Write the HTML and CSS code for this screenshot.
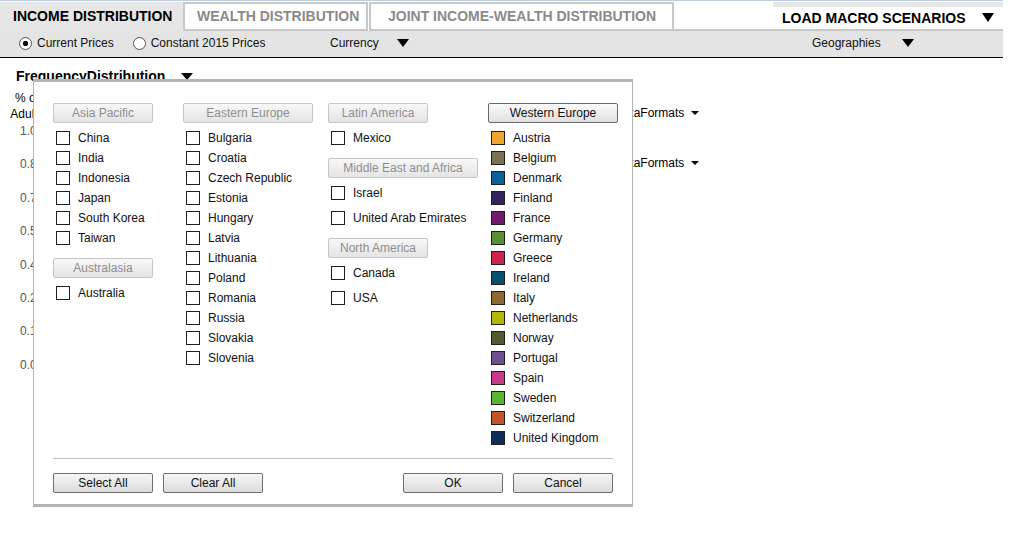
FILE: index.html
```html
<!DOCTYPE html>
<html>
<head>
<meta charset="utf-8">
<title>Income Distribution</title>
<link rel="stylesheet" href="styles.css">
</head>
<body>
<div class="app">
  <header class="tabs">
    <div class="tab active">INCOME DISTRIBUTION</div>
    <div class="tab wealth">WEALTH DISTRIBUTION</div>
    <div class="tab joint">JOINT INCOME-WEALTH DISTRIBUTION</div>
    <div class="tab-fill"></div>
    <div class="load"><span>LOAD MACRO SCENARIOS</span><i class="tri"></i></div>
  </header>

  <div class="toolbar">
    <div class="radios">
      <label class="radio"><span class="dot on"></span>Current Prices</label>
      <label class="radio second"><span class="dot"></span>Constant 2015 Prices</label>
    </div>
    <div class="dd currency">Currency<i class="tri"></i></div>
    <div class="dd geo">Geographies<i class="tri"></i></div>
  </div>

  <main class="content">
    <div class="freq">FrequencyDistribution<i class="tri"></i></div>
    <div class="chart">
      <div class="yaxis">
        <div class="ytitle">% of<br>Adults</div>
        <ul class="ticks">
          <li>1.0</li><li>0.8</li><li>0.7</li><li>0.5</li><li>0.4</li><li>0.2</li><li>0.1</li><li>0.0</li>
        </ul>
      </div>
      <div class="formats">
        <div class="fmt">DataFormats<i class="tri small"></i></div>
        <div class="fmt second">DataFormats<i class="tri small"></i></div>
      </div>
    </div>
  </main>

  <div class="modal">
    <div class="mbody">
      <div class="col">
        <div class="group">
          <div class="region w100">Asia Pacific</div>
          <ul class="list">
            <li class="item"><span class="box"></span>China</li>
            <li class="item"><span class="box"></span>India</li>
            <li class="item"><span class="box"></span>Indonesia</li>
            <li class="item"><span class="box"></span>Japan</li>
            <li class="item"><span class="box"></span>South Korea</li>
            <li class="item"><span class="box"></span>Taiwan</li>
          </ul>
        </div>
        <div class="group">
          <div class="region w100">Australasia</div>
          <ul class="list">
            <li class="item"><span class="box"></span>Australia</li>
          </ul>
        </div>
      </div>

      <div class="col">
        <div class="group">
          <div class="region w130">Eastern Europe</div>
          <ul class="list">
            <li class="item"><span class="box"></span>Bulgaria</li>
            <li class="item"><span class="box"></span>Croatia</li>
            <li class="item"><span class="box"></span>Czech Republic</li>
            <li class="item"><span class="box"></span>Estonia</li>
            <li class="item"><span class="box"></span>Hungary</li>
            <li class="item"><span class="box"></span>Latvia</li>
            <li class="item"><span class="box"></span>Lithuania</li>
            <li class="item"><span class="box"></span>Poland</li>
            <li class="item"><span class="box"></span>Romania</li>
            <li class="item"><span class="box"></span>Russia</li>
            <li class="item"><span class="box"></span>Slovakia</li>
            <li class="item"><span class="box"></span>Slovenia</li>
          </ul>
        </div>
      </div>

      <div class="col">
        <div class="group">
          <div class="region w100">Latin America</div>
          <ul class="list loose">
            <li class="item"><span class="box"></span>Mexico</li>
          </ul>
        </div>
        <div class="group">
          <div class="region w150">Middle East and Africa</div>
          <ul class="list loose">
            <li class="item"><span class="box"></span>Israel</li>
            <li class="item"><span class="box"></span>United Arab Emirates</li>
          </ul>
        </div>
        <div class="group">
          <div class="region w100">North America</div>
          <ul class="list loose">
            <li class="item"><span class="box"></span>Canada</li>
            <li class="item"><span class="box"></span>USA</li>
          </ul>
        </div>
      </div>

      <div class="col">
        <div class="group">
          <div class="region w130 selected">Western Europe</div>
          <ul class="list">
            <li class="item"><span class="box c-austria"></span>Austria</li>
            <li class="item"><span class="box c-belgium"></span>Belgium</li>
            <li class="item"><span class="box c-denmark"></span>Denmark</li>
            <li class="item"><span class="box c-finland"></span>Finland</li>
            <li class="item"><span class="box c-france"></span>France</li>
            <li class="item"><span class="box c-germany"></span>Germany</li>
            <li class="item"><span class="box c-greece"></span>Greece</li>
            <li class="item"><span class="box c-ireland"></span>Ireland</li>
            <li class="item"><span class="box c-italy"></span>Italy</li>
            <li class="item"><span class="box c-netherlands"></span>Netherlands</li>
            <li class="item"><span class="box c-norway"></span>Norway</li>
            <li class="item"><span class="box c-portugal"></span>Portugal</li>
            <li class="item"><span class="box c-spain"></span>Spain</li>
            <li class="item"><span class="box c-sweden"></span>Sweden</li>
            <li class="item"><span class="box c-switzerland"></span>Switzerland</li>
            <li class="item"><span class="box c-uk"></span>United Kingdom</li>
          </ul>
        </div>
      </div>
    </div>

    <div class="sep"></div>

    <div class="mfoot">
      <div class="btns">
        <button class="btn">Select All</button>
        <button class="btn">Clear All</button>
      </div>
      <div class="btns">
        <button class="btn">OK</button>
        <button class="btn">Cancel</button>
      </div>
    </div>
  </div>
</div>
</body>
</html>
```

FILE: styles.css
```css
* { box-sizing: border-box; }

html, body {
  margin: 0;
  padding: 0;
  background: #fff;
}

body {
  font-family: "Liberation Sans", Arial, sans-serif;
  font-size: 12px;
  color: #111;
}

.app {
  position: relative;
  width: 1003px;
  min-height: 537px;
  border-top: 1px solid #bccfe6;
}

/* ---------- tabs ---------- */
.tabs {
  display: flex;
  height: 29px;
  margin-top: 1px;
}

.tab {
  height: 29px;
  border: 2px solid #c8c8c8;
  background: #fff;
  display: flex;
  align-items: center;
  padding-bottom: 1px;
  font-size: 14px;
  font-weight: 700;
  color: #8a8a8a;
  white-space: nowrap;
}

.tab.active {
  width: 183px;
  border: none;
  background: #e6e6e6;
  color: #000;
  padding-left: 13px;
  padding-bottom: 2px;
}

.tab.wealth {
  width: 185px;
  padding-left: 12px;
}

.tab.joint {
  width: 305px;
  margin-left: 1px;
  padding-left: 17px;
}

.tab-fill {
  flex: 1;
  height: 29px;
  border-bottom: 2px solid #c8c8c8;
}

.load {
  width: 230px;
  height: 29px;
  border-top: 5px solid #e6e6e6;
  border-bottom: 2px solid #c8c8c8;
  padding: 0 9px 1px 9px;
  display: flex;
  align-items: center;
  justify-content: space-between;
  font-size: 14px;
  font-weight: 700;
  color: #000;
  white-space: nowrap;
}

.tri {
  display: inline-block;
  width: 0;
  height: 0;
  border-left: 6px solid transparent;
  border-right: 6px solid transparent;
  border-top: 9px solid #000;
}

.tri.small {
  border-left-width: 4px;
  border-right-width: 4px;
  border-top-width: 4px;
}

/* ---------- toolbar ---------- */
.toolbar {
  height: 27px;
  background: #e4e4e4;
  border-bottom: 1px solid #000;
  display: flex;
  align-items: center;
  padding: 0 78px 2px 19px;
}

.radios {
  width: 311px;
  display: flex;
  align-items: center;
}

.radio {
  display: flex;
  align-items: center;
  white-space: nowrap;
}

.radio.second {
  margin-left: 19px;
}

.dot {
  width: 13px;
  height: 13px;
  border: 1px solid #555;
  border-radius: 50%;
  background: #fff;
  margin-right: 5px;
}

.dot.on {
  background: radial-gradient(circle, #111 0 2.5px, #fff 3px);
}

.dd {
  display: flex;
  align-items: center;
  white-space: nowrap;
}

.dd .tri {
  margin-left: auto;
  border-top-width: 8px;
}

.dd.currency {
  width: 88px;
  padding-right: 9px;
}

.dd.geo {
  width: 113px;
  margin-left: auto;
  padding-right: 11px;
}

/* ---------- background content ---------- */
.content {
  position: relative;
}

.freq {
  display: flex;
  align-items: center;
  padding: 10px 0 0 16px;
  font-size: 14px;
  font-weight: 700;
  line-height: 16px;
  color: #000;
}

.freq .tri {
  margin-left: 16px;
  border-top-width: 7px;
}

.chart {
  display: grid;
  grid-template-columns: 615px 1fr;
}

.ytitle {
  width: 54px;
  margin-top: 6px;
  text-align: center;
  line-height: 16px;
  color: #000;
}

.ticks {
  list-style: none;
  margin: 1px 0 0 0;
  padding: 0 0 0 20px;
}

.ticks li {
  height: 33.4px;
  line-height: 16px;
  color: #555;
}

.formats {
  padding-top: 21px;
}

.fmt {
  display: flex;
  align-items: center;
  line-height: 16px;
  color: #000;
}

.fmt.second {
  margin-top: 34px;
}

.fmt .tri {
  margin-left: 7px;
}

/* ---------- modal ---------- */
.modal {
  position: absolute;
  left: 33px;
  top: 78px;
  width: 600px;
  z-index: 10;
  background: #fff;
  border-style: solid;
  border-color: #b4b4b4;
  border-width: 3px 1px 3px 1px;
  padding: 21px 19px 11px 19px;
}

.mbody {
  display: grid;
  grid-template-columns: 130px 145px 160px 125px;
}

.group + .group {
  margin-top: 10px;
}

.region {
  height: 20px;
  border: 1px solid #c6c6c6;
  border-radius: 2px;
  background: linear-gradient(#f8f8f8, #e4e4e4);
  color: #8e8e8e;
  text-align: center;
  line-height: 18px;
  white-space: nowrap;
}

.region.selected {
  border-color: #6a6a6a;
  background: linear-gradient(#fbfbfb, #e0e0e0);
  color: #111;
}

.w100 { width: 100px; }
.w130 { width: 130px; }
.w150 { width: 150px; }

.list {
  list-style: none;
  margin: 5px 0 0 0;
  padding: 0;
  display: flex;
  flex-direction: column;
}

.list.loose {
  row-gap: 5px;
}

.item {
  height: 20px;
  display: flex;
  align-items: center;
  padding-left: 3px;
  white-space: nowrap;
}

.box {
  width: 14px;
  height: 14px;
  border: 1px solid #1e1e1e;
  background: #fff;
  margin-right: 8px;
  flex: none;
}

.c-austria { background: #f2a431; }
.c-belgium { background: #7a7350; }
.c-denmark { background: #0b609b; }
.c-finland { background: #33245f; }
.c-france { background: #711b6d; }
.c-germany { background: #5a8f33; }
.c-greece { background: #cc244d; }
.c-ireland { background: #064f6e; }
.c-italy { background: #8c6a33; }
.c-netherlands { background: #b3b800; }
.c-norway { background: #525a30; }
.c-portugal { background: #6e5092; }
.c-spain { background: #c73b87; }
.c-sweden { background: #5ab532; }
.c-switzerland { background: #c25526; }
.c-uk { background: #0d2d56; }

.sep {
  margin-top: 10px;
  border-top: 1px solid #c0c0c0;
}

.mfoot {
  margin-top: 14px;
  display: flex;
  justify-content: space-between;
}

.btns {
  display: flex;
  gap: 10px;
}

.btn {
  width: 100px;
  height: 20px;
  padding: 0;
  border: 1px solid #707070;
  border-radius: 2px;
  background: linear-gradient(#f6f6f6, #dcdcdc);
  font-family: "Liberation Sans", Arial, sans-serif;
  font-size: 12px;
  color: #111;
  line-height: 18px;
}
```
